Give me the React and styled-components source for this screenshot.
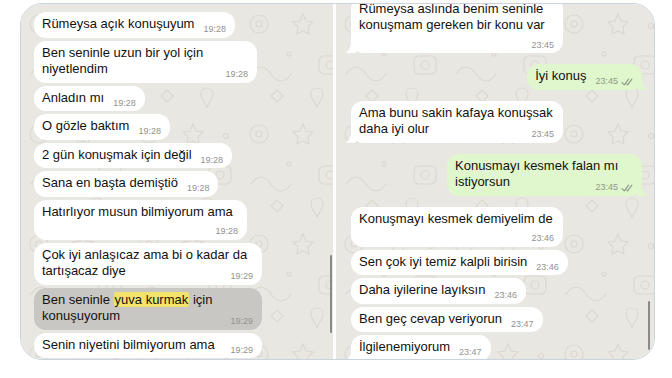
import styled, { createGlobalStyle } from "styled-components";

const GlobalStyle = createGlobalStyle`
  html, body {
    margin: 0;
    padding: 0;
    background: #fff;
  }
  body {
    font-family: "Liberation Sans", Arial, sans-serif;
    -webkit-font-smoothing: antialiased;
  }
`;

const Page = styled.div`
  width: 672px;
  height: 378px;
  box-sizing: border-box;
  padding: 3px 0 0 20px;
  background: #fff;
  overflow: hidden;
`;

const Frame = styled.div`
  width: 635px;
  height: 357px;
  box-sizing: border-box;
  display: flex;
  gap: 3px;
  border: 1px solid #cbd4de;
  border-radius: 22px;
  overflow: hidden;
  background: #fff;
`;

const Panel = styled.div`
  position: relative;
  overflow: hidden;
  background: #e9e7e2;
  width: ${({ $w }) => ($w ? `${$w}px` : "auto")};
  flex: ${({ $w }) => ($w ? "none" : "1")};
`;

const WallSvg = styled.svg`
  position: absolute;
  inset: 0;
  width: 100%;
  height: 100%;
`;

const Thread = styled.div`
  position: relative;
  display: flex;
  flex-direction: column;
  align-items: flex-start;
  margin-top: ${({ $top }) => $top}px;
  padding: 0 ${({ $r }) => $r}px 0 ${({ $l }) => $l}px;
`;

const Bubble = styled.div`
  position: relative;
  box-sizing: border-box;
  align-self: ${({ $own }) => ($own ? "flex-end" : "flex-start")};
  width: ${({ $w }) => ($w ? `${$w}px` : "auto")};
  margin-top: ${({ $gap }) => $gap}px;
  padding: 4px 9px 2.5px 8px;
  border-radius: 12px;
  color: ${({ $own, $sel }) => ($sel ? "#c9c7c3" : $own ? "#e0f7cd" : "#ffffff")};
  background: currentColor;

  &:first-child {
    margin-top: 0;
  }
`;

const Line = styled.div`
  color: #111;
  font-size: 13px;
  line-height: 16.5px;
  white-space: nowrap;
`;

const Row = styled.div`
  display: flex;
  align-items: flex-start;
  justify-content: ${({ $solo }) => ($solo ? "flex-end" : "space-between")};
  gap: 9px;
`;

const Meta = styled.span`
  display: flex;
  align-items: center;
  gap: 3px;
  margin-top: ${({ $solo }) => ($solo ? 6 : 8)}px;
  font-size: 9px;
  line-height: 11px;
  color: ${({ $own }) => ($own ? "#8c9887" : "#929292")};
  white-space: nowrap;
`;

const Mark = styled.span`
  background: #f4e36a;
  border-radius: 2px;
  padding: 0 1px;
`;

const Tail = styled.svg`
  position: absolute;
  bottom: 0;
  ${({ $own }) => ($own ? "right: -5px; transform: scaleX(-1);" : "left: -5px;")}
  fill: currentColor;
`;

const Scroll = styled.div`
  position: absolute;
  top: ${({ $top }) => $top}px;
  right: ${({ $right }) => $right}px;
  width: 2.5px;
  height: ${({ $h }) => $h}px;
  border-radius: 2px;
  background: #8a8a8a;
`;

const left = [
  { lines: ["Rümeysa açık konuşuyum"], time: "19:28" },
  { lines: ["Ben seninle uzun bir yol için", "niyetlendim"], time: "19:28", w: 223 },
  { lines: ["Anladın mı"], time: "19:28" },
  { lines: ["O gözle baktım"], time: "19:28" },
  { lines: ["2 gün konuşmak için değil"], time: "19:28" },
  { lines: ["Sana en başta demiştiö"], time: "19:28" },
  { lines: ["Hatırlıyor musun bilmiyorum ama"], time: "19:28", w: 213, timeRow: true },
  { lines: ["Çok iyi anlaşıcaz ama bi o kadar da", "tartışacaz diye"], time: "19:29", w: 228 },
  {
    lines: [
      <>
        Ben seninle <Mark>yuva kurmak</Mark> için
      </>,
      "konuşuyorum",
    ],
    time: "19:29",
    w: 228,
    sel: true,
  },
  { lines: ["Senin niyetini bilmiyorum ama"], time: "19:29", w: 228 },
];

const right = [
  { lines: ["Rümeysa aslında benim seninle", "konuşmam gereken bir konu var"], time: "23:45", w: 212, timeRow: true, tail: true },
  { lines: ["İyi konuş"], time: "23:45", own: true, gap: 11, tail: true },
  { lines: ["Ama bunu sakin kafaya konuşsak", "daha iyi olur"], time: "23:45", w: 212, gap: 11, tail: true },
  { lines: ["Konusmayı kesmek falan mı", "istiyorsun"], time: "23:45", w: 195, own: true, gap: 11, tail: true },
  { lines: ["Konuşmayı kesmek demiyelim de"], time: "23:46", w: 212, gap: 11, timeRow: true },
  { lines: ["Sen çok iyi temiz kalpli birisin"], time: "23:46" },
  { lines: ["Daha iyilerine layıksın"], time: "23:46" },
  { lines: ["Ben geç cevap veriyorun"], time: "23:47" },
  { lines: ["İlgilenemiyorum"], time: "23:47", tail: true },
];

const Ticks = () => (
  <svg width="12" height="8" viewBox="0 0 12 8" fill="none" stroke="currentColor" strokeWidth="1.1" strokeLinecap="round" strokeLinejoin="round">
    <path d="M1 4.6 L3.3 6.9 L7.6 1.2" />
    <path d="M5.6 5.9 L6.6 6.9 L10.9 1.2" />
  </svg>
);

const Wallpaper = () => (
  <WallSvg aria-hidden="true">
    <defs>
      <pattern id="doodle" width="110" height="110" patternUnits="userSpaceOnUse">
        <g fill="none" stroke="#dcd8d1" strokeWidth="1.2" strokeLinecap="round">
          <circle cx="18" cy="20" r="9" />
          <circle cx="18" cy="20" r="3" />
          <path d="M62 10 l3 7 7 1 -5 5 1 7 -6 -3 -6 3 1 -7 -5 -5 7 -1z" />
          <rect x="78" y="52" width="22" height="18" rx="5" />
          <circle cx="89" cy="61" r="4" />
          <path d="M10 70 q10 -14 20 0 t20 0" />
          <circle cx="48" cy="50" r="2" />
          <circle cx="95" cy="22" r="2.5" />
          <path d="M30 92 l6 -6 6 6 -6 6z" />
          <path d="M70 90 c0 -8 12 -8 12 0 c0 6 -6 10 -6 14 c0 -4 -6 -8 -6 -14z" />
        </g>
      </pattern>
    </defs>
    <rect width="100%" height="100%" fill="url(#doodle)" />
  </WallSvg>
);

const Message = ({ m }) => {
  const body = m.lines.slice(0, m.timeRow ? m.lines.length : -1);
  const last = m.timeRow ? null : m.lines[m.lines.length - 1];
  return (
    <Bubble $own={m.own} $w={m.w} $gap={m.gap || 3} $sel={m.sel}>
      {body.map((l, i) => (
        <Line key={i}>{l}</Line>
      ))}
      <Row $solo={m.timeRow}>
        {last !== null && <Line>{last}</Line>}
        <Meta $own={m.own} $solo={m.timeRow}>
          {m.time}
          {m.own && <Ticks />}
        </Meta>
      </Row>
      {m.tail && (
        <Tail $own={m.own} viewBox="0 0 10 14" width="10" height="14">
          <path d="M10 0 L10 14 L1.2 14 C0.3 14 0 13.2 0.7 12.8 C3.6 10.8 5 7.5 5 3 L5 0 Z" />
        </Tail>
      )}
    </Bubble>
  );
};

export default function App() {
  return (
    <Page>
      <GlobalStyle />
      <Frame>
        <Panel $w={312}>
          <Wallpaper />
          <Thread $top={8} $l={13} $r={10}>
            {left.map((m, i) => (
              <Message key={i} m={m} />
            ))}
          </Thread>
          <Scroll $top={251} $h={78} $right={1} />
        </Panel>
        <Panel>
          <Wallpaper />
          <Thread $top={-7.5} $l={15} $r={12}>
            {right.map((m, i) => (
              <Message key={i} m={m} />
            ))}
          </Thread>
          <Scroll $top={297} $h={49} $right={4} />
        </Panel>
      </Frame>
    </Page>
  );
}
